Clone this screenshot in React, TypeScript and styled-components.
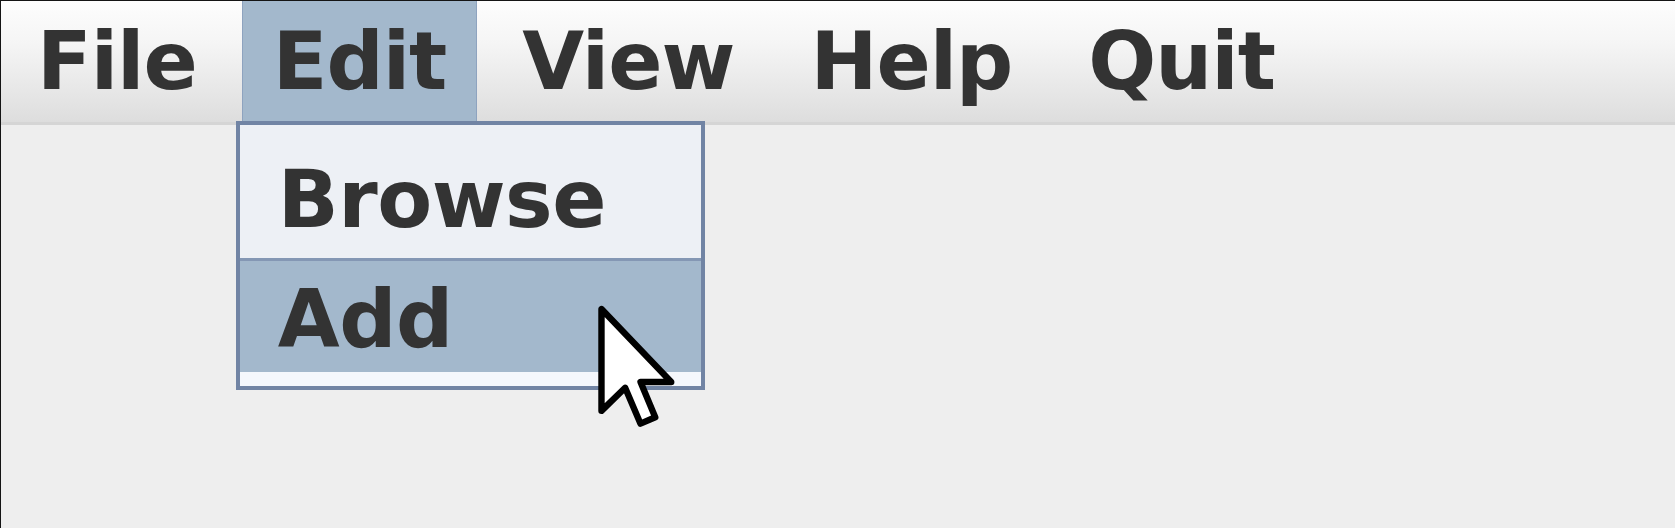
import React from "react";
import styled, { createGlobalStyle } from "styled-components";

const GlobalStyle = createGlobalStyle`
  html, body { margin: 0; padding: 0; background: #eeeeee; }
  #root { width: 1675px; height: 528px; }
`;

const Frame = styled.div`
  box-sizing: border-box;
  width: 1675px;
  height: 528px;
  border-top: 1px solid #141414;
  border-left: 1px solid #141414;
  background: #eeeeee;
  overflow: hidden;
  font-family: "DejaVu Sans", "Liberation Sans", sans-serif;
  font-weight: bold;
  color: #333333;
`;

const Stage = styled.div`
  position: relative;
`;

const MenuBar = styled.nav`
  display: flex;
  align-items: stretch;
  gap: 14px;
  height: 121px;
  padding-left: 5px;
  background: linear-gradient(#fdfdfd 0%, #f5f5f5 35%, #e3e3e3 85%, #dddddd 100%);
  border-bottom: 3px solid #d5d5d5;
`;

const MenuItem = styled.div<{ $active?: boolean }>`
  position: relative;
  display: flex;
  align-items: center;
  padding: 0 31px;
  font-size: 80px;
  line-height: 93px;
  letter-spacing: -1px;
  background: ${(p) => (p.$active ? "#a3b8cc" : "transparent")};
  box-shadow: ${(p) => (p.$active ? "inset 1px 0 0 #8ea3bf, inset -1px 0 0 #8ea3bf" : "none")};
`;

const Popup = styled.div`
  position: absolute;
  top: calc(100% - 1px);
  left: -6px;
  width: 461px;
  border: 4px solid #7184a4;
  background: #f4f7fc;
  display: flex;
  flex-direction: column;
  padding-bottom: 14px;
  letter-spacing: -0.5px;
  z-index: 2;
`;

const PopupItem = styled.div<{ $selected?: boolean }>`
  box-sizing: border-box;
  height: ${(p) => (p.$selected ? "114px" : "133px")};
  padding: ${(p) => (p.$selected ? "12px 0 0 38px" : "28px 0 0 38px")};
  font-size: 80px;
  line-height: 93px;
  background: ${(p) => (p.$selected ? "#a3b8cc" : "#edf0f5")};
  border-top: ${(p) => (p.$selected ? "3px solid #8497b4" : "none")};
`;

const Cursor = styled.svg`
  position: absolute;
  left: 596px;
  top: 302px;
  z-index: 3;
`;

export default function App() {
  return (
    <>
      <GlobalStyle />
      <Frame>
        <Stage>
          <MenuBar>
            <MenuItem>File</MenuItem>
            <MenuItem $active>
              Edit
              <Popup>
                <PopupItem>Browse</PopupItem>
                <PopupItem $selected>Add</PopupItem>
              </Popup>
            </MenuItem>
            <MenuItem>View</MenuItem>
            <MenuItem>Help</MenuItem>
            <MenuItem>Quit</MenuItem>
          </MenuBar>
          <Cursor width="80" height="128" viewBox="0 0 12.5 19.5">
            <path
              d="M0.7 0.7 L0.7 16.6 L4.4 13 L6.8 18.6 L9.1 17.6 L6.8 12.1 L11.6 12.1 Z"
              fill="#ffffff"
              stroke="#000000"
              strokeWidth="1"
              strokeLinejoin="round"
            />
          </Cursor>
        </Stage>
      </Frame>
    </>
  );
}
